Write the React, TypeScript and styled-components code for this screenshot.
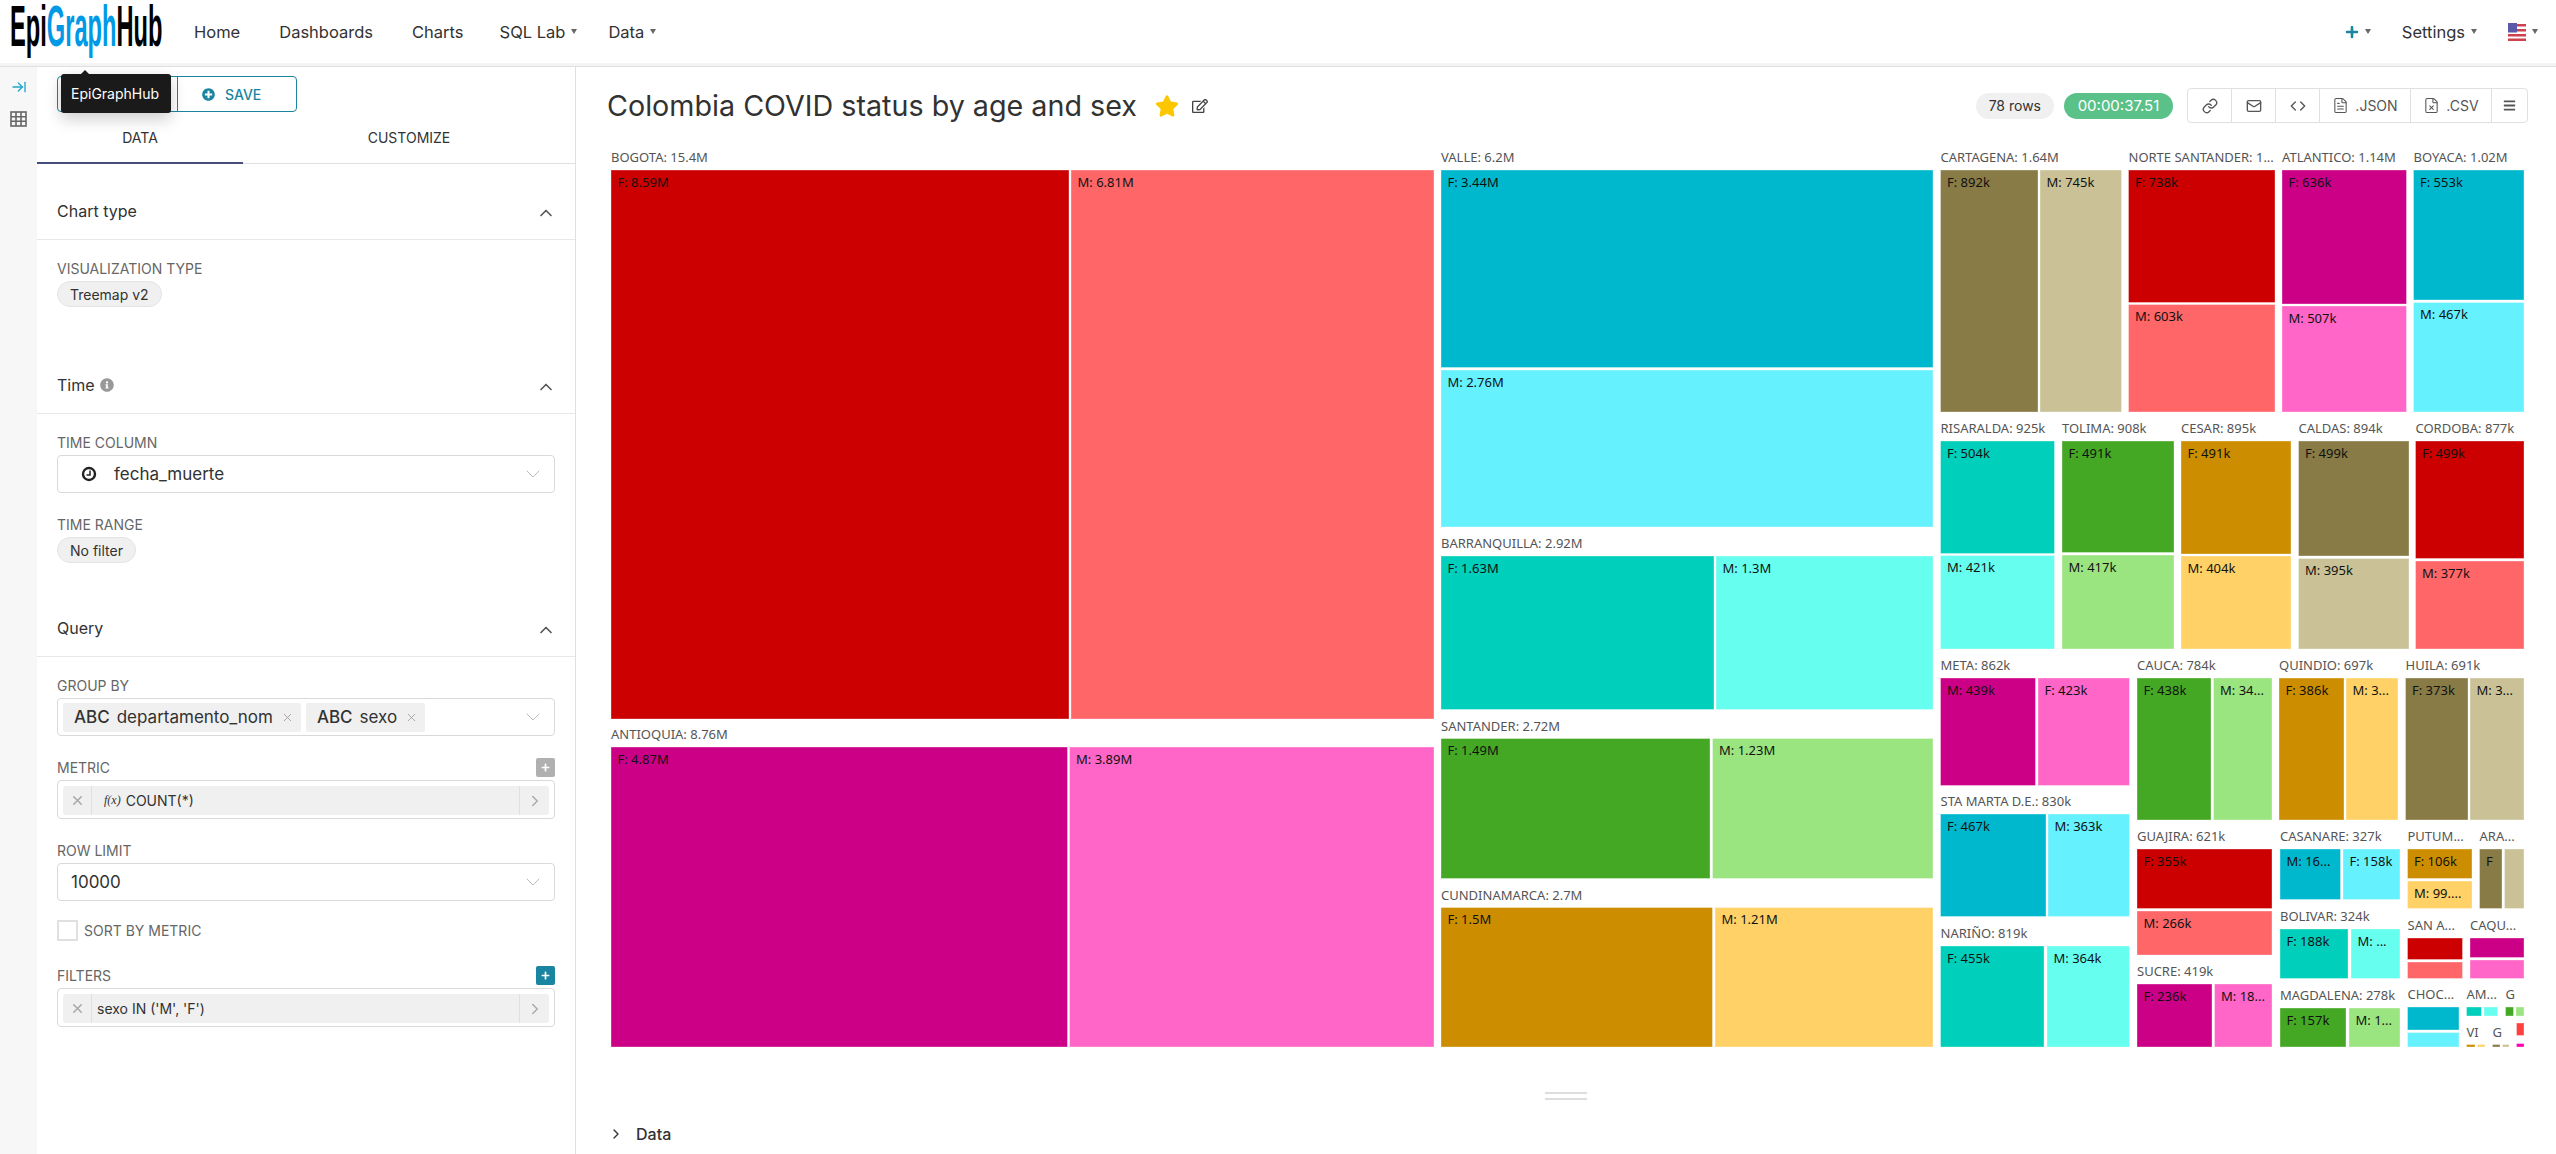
import styled, { createGlobalStyle } from "styled-components";
import { ArrowRightToLine, ChevronDown, ChevronRight, ChevronUp, Code, FileText, FileX, Link, Mail, X } from "lucide-react";
import { FaBars, FaInfoCircle, FaPlus, FaPlusCircle, FaRegEdit, FaStar } from "react-icons/fa";

const GlobalStyle = createGlobalStyle`
  html, body { margin: 0; padding: 0; background: #fff; }
  body { font-family: Inter, "Liberation Sans", sans-serif; color: #323232; overflow: hidden; }
`;

const Page = styled.div`
  width: 2556px;
  height: 1154px;
  display: flex;
  flex-direction: column;
  overflow: hidden;
`;

const Header = styled.header`
  height: 63px;
  flex: none;
  display: flex;
  align-items: center;
  padding: 0 18px 0 10px;
  border-bottom: 3px solid #f4f4f4;
  box-shadow: 0 1px 0 #e0e0e0;
`;

const LogoMark = styled.svg`
  flex: none;
  overflow: visible;
`;

const Nav = styled.nav`
  display: flex;
  align-items: center;
  gap: 39px;
  margin-left: 32px;
  font-size: 16.5px;
  color: #323232;
`;

const NavItem = styled.span`
  display: flex;
  align-items: center;
  gap: 6px;
`;

// carets sit closer to the neighbouring items than plain links do
const CaretItem = styled(NavItem)`
  margin: 0 -5px 0 -3px;
`;

const Caret = styled.i`
  width: 0;
  height: 0;
  border-left: 3px solid transparent;
  border-right: 3px solid transparent;
  border-top: 5px solid #666;
`;

const RightNav = styled(Nav)`
  margin-left: auto;
  gap: 31px;
`;

const Body = styled.div`
  flex: 1;
  display: flex;
  min-height: 0;
  margin-top: 1px;
`;

const Rail = styled.aside`
  width: 37px;
  flex: none;
  background: #f7f7f7;
  display: flex;
  flex-direction: column;
  align-items: center;
  padding-top: 12px;
  gap: 16px;
  color: #666;
`;

const Sidebar = styled.aside`
  width: 538px;
  flex: none;
  position: relative;
  border-right: 1px solid #e0e0e0;
`;

const ButtonRow = styled.div`
  display: flex;
  margin: 9px 0 0 20px;
  width: 240px;
  height: 36px;
  border: 1px solid #1985a0;
  border-radius: 4px;
  box-sizing: border-box;
`;

const RunSlot = styled.div`
  width: 119px;
  border-right: 1px solid #1985a0;
`;

const SaveButton = styled.div`
  flex: 1;
  display: flex;
  align-items: center;
  gap: 10px;
  padding-left: 24px;
  color: #1985a0;
  font-size: 14px;
  font-weight: 500;
`;

const Tooltip = styled.div`
  position: absolute;
  left: 24px;
  top: 7px;
  width: 110px;
  height: 39px;
  box-sizing: border-box;
  padding-left: 10px;
  display: flex;
  align-items: center;
  background: #1a1a1a;
  color: #fff;
  font-size: 14px;
  border-radius: 3px;
  box-shadow: 0 6px 16px rgba(0, 0, 0, 0.2);
  &::before {
    content: "";
    position: absolute;
    left: 20px;
    top: -4px;
    border-left: 4px solid transparent;
    border-right: 4px solid transparent;
    border-bottom: 4px solid #1a1a1a;
  }
`;

const Tabs = styled.div`
  display: flex;
  height: 52px;
  margin-bottom: 2px;
  box-sizing: border-box;
  border-bottom: 1px solid #e0e0e0;
`;

const Tab = styled.div<{ $active?: boolean; $width: number }>`
  width: ${({ $width }) => $width}px;
  height: 52px;
  box-sizing: border-box;
  display: flex;
  align-items: center;
  justify-content: center;
  font-size: 14px;
  color: #323232;
  border-bottom: 2px solid ${({ $active }) => ($active ? "#484e7a" : "transparent")};
`;

const SectionHeader = styled.div`
  height: 74px;
  box-sizing: border-box;
  display: flex;
  align-items: flex-end;
  justify-content: space-between;
  padding: 0 19px 16px 20px;
  border-bottom: 1px solid #e8e8e8;
  font-size: 16px;
  line-height: 24px;
  color: #323232;
  > svg { color: #555; }
`;

const SectionTitle = styled.span`
  display: flex;
  align-items: center;
  gap: 5px;
  svg { color: #999; }
`;

const SectionBody = styled.div<{ $bottom: number }>`
  display: flex;
  flex-direction: column;
  gap: 21px;
  padding: 18px 20px ${({ $bottom }) => $bottom}px 20px;
`;

const Field = styled.div`
  display: flex;
  flex-direction: column;
`;

const FieldLabel = styled.div`
  display: flex;
  align-items: center;
  justify-content: space-between;
  height: 20px;
  margin-bottom: 3px;
  font-size: 14px;
  color: #666;
  text-transform: uppercase;
`;

const Pill = styled.span`
  align-self: flex-start;
  height: 26px;
  box-sizing: border-box;
  padding: 0 12px;
  display: inline-flex;
  align-items: center;
  background: #f0f0f0;
  border: 1px solid #e4e4e4;
  border-radius: 13px;
  font-size: 14px;
  color: #323232;
`;

const SelectBox = styled.div`
  height: 38px;
  box-sizing: border-box;
  display: flex;
  align-items: center;
  padding: 0 9px 0 5px;
  gap: 5px;
  border: 1px solid #d9d9d9;
  border-radius: 4px;
  font-size: 17px;
  color: #323232;
  > svg:last-child { margin-left: auto; color: #bbb; }
`;

const PlainValue = styled.span<{ $left: number }>`
  margin-left: ${({ $left }) => $left}px;
`;

const ClockIcon = styled.svg`
  flex: none;
  margin-left: 18px;
  margin-right: 12px;
`;

const Chip = styled.span`
  height: 29px;
  display: flex;
  align-items: center;
  padding: 0 7px 0 11px;
  background: #f0f0f0;
  border-radius: 2px;
  color: #323232;
`;

const ChipType = styled.b`
  font-weight: 500;
  margin-right: 7px;
`;

const ChipClose = styled.span`
  display: flex;
  margin-left: 8px;
  color: #999;
`;

const AddButton = styled.span<{ $active?: boolean }>`
  width: 19px;
  height: 19px;
  display: flex;
  align-items: center;
  justify-content: center;
  border-radius: 2px;
  color: #fff;
  background: ${({ $active }) => ($active ? "#1985a0" : "#b0b0b0")};
`;

const ValueBox = styled.div`
  height: 39px;
  box-sizing: border-box;
  padding: 5px;
  border: 1px solid #d9d9d9;
  border-radius: 4px;
`;

const ValueChip = styled.div`
  height: 29px;
  display: flex;
  align-items: center;
  background: #f0f0f0;
  border-radius: 3px;
  font-size: 14px;
  color: #323232;
`;

const ValueClose = styled.span`
  width: 28px;
  height: 100%;
  display: flex;
  align-items: center;
  justify-content: center;
  color: #aaa;
  border-right: 1px solid #e0e0e0;
`;

const ValueText = styled.span`
  flex: 1;
  padding-left: 5px;
  display: flex;
  align-items: center;
`;

const FxMark = styled.em`
  font-family: "Liberation Serif", serif;
  font-size: 12px;
  margin: 0 5px 0 7px;
`;

const ValueMore = styled.span`
  width: 29px;
  height: 100%;
  display: flex;
  align-items: center;
  justify-content: center;
  color: #aaa;
  border-left: 1px solid #e0e0e0;
`;

const CheckRow = styled.div`
  display: flex;
  align-items: center;
  gap: 6px;
  margin: -2px 0 3px;
  font-size: 14px;
  color: #666;
`;

const CheckBox = styled.span`
  width: 21px;
  height: 21px;
  box-sizing: border-box;
  border: 2px solid #e0e0e0;
`;

const Main = styled.main`
  flex: 1;
  min-width: 0;
  display: flex;
  flex-direction: column;
`;

const TitleRow = styled.div`
  height: 73px;
  flex: none;
  display: flex;
  align-items: center;
  padding: 4px 28px 0 31px;
  box-sizing: border-box;
`;

const Title = styled.h1`
  margin: 0 18px 0 0;
  font-size: 28.7px;
  font-weight: 400;
  color: #323232;
`;

const StarIcon = styled.span`
  display: flex;
  color: #fcc700;
  margin-right: 13px;
`;

const EditIcon = styled.span`
  display: flex;
  color: #444;
`;

const RowCount = styled.span`
  margin-left: auto;
  height: 26px;
  padding: 0 13px;
  display: flex;
  align-items: center;
  border-radius: 13px;
  background: #f0f0f0;
  font-size: 14px;
  color: #323232;
`;

const Timer = styled(RowCount)`
  width: 109px;
  box-sizing: border-box;
  padding: 0;
  justify-content: center;
  margin-left: 10px;
  margin-right: 14px;
  background: #5ac189;
  color: #fff;
  font-size: 15px;
`;

const ActionGroup = styled.div`
  display: flex;
  height: 35px;
  box-sizing: border-box;
  border: 1px solid #e0e0e0;
  border-radius: 4px;
`;

const ActionButton = styled.span<{ $width: number }>`
  width: ${({ $width }) => $width}px;
  box-sizing: border-box;
  display: flex;
  align-items: center;
  justify-content: center;
  gap: 6px;
  border-right: 1px solid #e0e0e0;
  font-size: 14px;
  color: #555;
  &:last-child { border-right: 0; }
`;

const ChartSvg = styled.svg`
  display: block;
  flex: none;
  margin-left: 24px;
`;

const Cell = styled.rect`
  stroke: #fff;
  stroke-opacity: 0.35;
  stroke-width: 1;
`;

const GroupLabel = styled.text`
  font-family: "Noto Sans", "Open Sans", sans-serif;
  font-size: 13px;
  fill: #555;
`;

const LeafLabel = styled.text`
  font-family: "Noto Sans", "Open Sans", sans-serif;
  font-size: 13px;
  fill: #111;
`;

const Resizer = styled.div`
  align-self: center;
  margin: 40px 0 0 -1px;
  width: 42px;
  height: 8px;
  box-sizing: border-box;
  border-top: 2px solid #ddd;
  border-bottom: 2px solid #ddd;
`;

const DataRow = styled.div`
  display: flex;
  align-items: center;
  gap: 12px;
  margin: 24px 0 0 32px;
  font-size: 16px;
  font-weight: 500;
  color: #323232;
`;

const colors: Record<string, string> = {
  red: "#cc0000",
  red2: "#ff6668",
  mag: "#cc0086",
  mag2: "#ff66c7",
  cyan: "#00b8ce",
  cyan2: "#66f1ff",
  teal: "#00cfbb",
  teal2: "#66ffef",
  green: "#45a825",
  green2: "#9be581",
  gold: "#cc8e00",
  gold2: "#ffd166",
  olive: "#887b45",
  olive2: "#cac296",
};

type Leaf = [number, number, number, number, string, string];
type Group = { label: string; x: number; leaves: Leaf[] };

// x0, x1, y0, y1, colour, text, in page coordinates
const groups: Group[] = [
  { label: "BOGOTA: 15.4M", x: 611, leaves: [[611, 1069, 170, 719, "red", "F: 8.59M"], [1071, 1434, 170, 719, "red2", "M: 6.81M"]] },
  { label: "ANTIOQUIA: 8.76M", x: 611, leaves: [[611, 1067.5, 747, 1047, "mag", "F: 4.87M"], [1069.5, 1434, 747, 1047, "mag2", "M: 3.89M"]] },
  { label: "VALLE: 6.2M", x: 1441, leaves: [[1441, 1933, 170, 367.5, "cyan", "F: 3.44M"], [1441, 1933, 370, 527, "cyan2", "M: 2.76M"]] },
  { label: "BARRANQUILLA: 2.92M", x: 1441, leaves: [[1441, 1714, 556, 709.5, "teal", "F: 1.63M"], [1716, 1933, 556, 709.5, "teal2", "M: 1.3M"]] },
  { label: "SANTANDER: 2.72M", x: 1441, leaves: [[1441, 1710, 738.5, 878.5, "green", "F: 1.49M"], [1712.5, 1933, 738.5, 878.5, "green2", "M: 1.23M"]] },
  { label: "CUNDINAMARCA: 2.7M", x: 1441, leaves: [[1441, 1712.5, 907.5, 1047, "gold", "F: 1.5M"], [1715, 1933, 907.5, 1047, "gold2", "M: 1.21M"]] },
  { label: "CARTAGENA: 1.64M", x: 1940.5, leaves: [[1940.5, 2038, 170, 412, "olive", "F: 892k"], [2040, 2121.5, 170, 412, "olive2", "M: 745k"]] },
  { label: "NORTE SANTANDER: 1...", x: 2128.5, leaves: [[2128.5, 2275, 170, 302.5, "red", "F: 738k"], [2128.5, 2275, 304.5, 412, "red2", "M: 603k"]] },
  { label: "ATLANTICO: 1.14M", x: 2282, leaves: [[2282, 2406.5, 170, 304, "mag", "F: 636k"], [2282, 2406.5, 306, 412, "mag2", "M: 507k"]] },
  { label: "BOYACA: 1.02M", x: 2413.5, leaves: [[2413.5, 2524, 170, 300, "cyan", "F: 553k"], [2413.5, 2524, 302.5, 412, "cyan2", "M: 467k"]] },
  { label: "RISARALDA: 925k", x: 1940.5, leaves: [[1940.5, 2054.5, 441, 553.5, "teal", "F: 504k"], [1940.5, 2054.5, 555.5, 649, "teal2", "M: 421k"]] },
  { label: "TOLIMA: 908k", x: 2062, leaves: [[2062, 2174, 441, 552.5, "green", "F: 491k"], [2062, 2174, 555, 649, "green2", "M: 417k"]] },
  { label: "CESAR: 895k", x: 2181, leaves: [[2181, 2291, 441, 554, "gold", "F: 491k"], [2181, 2291, 556, 649, "gold2", "M: 404k"]] },
  { label: "CALDAS: 894k", x: 2298.5, leaves: [[2298.5, 2409, 441, 556, "olive", "F: 499k"], [2298.5, 2409, 558.5, 649, "olive2", "M: 395k"]] },
  { label: "CORDOBA: 877k", x: 2415.5, leaves: [[2415.5, 2524, 441, 558.5, "red", "F: 499k"], [2415.5, 2524, 561, 649, "red2", "M: 377k"]] },
  { label: "META: 862k", x: 1940.5, leaves: [[1940.5, 2035.5, 678, 785.5, "mag", "M: 439k"], [2038, 2129.5, 678, 785.5, "mag2", "F: 423k"]] },
  { label: "STA MARTA D.E.: 830k", x: 1940.5, leaves: [[1940.5, 2046, 814, 916.5, "cyan", "F: 467k"], [2048, 2129.5, 814, 916.5, "cyan2", "M: 363k"]] },
  { label: "NARIÑO: 819k", x: 1940.5, leaves: [[1940.5, 2044, 946, 1047, "teal", "F: 455k"], [2047, 2129.5, 946, 1047, "teal2", "M: 364k"]] },
  { label: "CAUCA: 784k", x: 2137, leaves: [[2137, 2211, 678, 820, "green", "F: 438k"], [2213.5, 2272, 678, 820, "green2", "M: 34..."]] },
  { label: "QUINDIO: 697k", x: 2279, leaves: [[2279, 2344, 678, 820, "gold", "F: 386k"], [2346, 2398, 678, 820, "gold2", "M: 3..."]] },
  { label: "HUILA: 691k", x: 2405.5, leaves: [[2405.5, 2468, 678, 820, "olive", "F: 373k"], [2470, 2524, 678, 820, "olive2", "M: 3..."]] },
  { label: "GUAJIRA: 621k", x: 2137, leaves: [[2137, 2272, 849, 908.5, "red", "F: 355k"], [2137, 2272, 911, 955, "red2", "M: 266k"]] },
  { label: "SUCRE: 419k", x: 2137, leaves: [[2137, 2212, 984, 1047, "mag", "F: 236k"], [2214.5, 2272, 984, 1047, "mag2", "M: 18..."]] },
  { label: "CASANARE: 327k", x: 2280, leaves: [[2280, 2340.5, 849, 899.5, "cyan", "M: 16..."], [2343, 2400, 849, 899.5, "cyan2", "F: 158k"]] },
  { label: "BOLIVAR: 324k", x: 2280, leaves: [[2280, 2348, 929, 978.5, "teal", "F: 188k"], [2351, 2400, 929, 978.5, "teal2", "M: ..."]] },
  { label: "MAGDALENA: 278k", x: 2280, leaves: [[2280, 2346, 1008, 1047, "green", "F: 157k"], [2349, 2400, 1008, 1047, "green2", "M: 1..."]] },
  { label: "PUTUM...", x: 2407.5, leaves: [[2407.5, 2472, 849, 878.5, "gold", "F: 106k"], [2407.5, 2472, 881, 908.5, "gold2", "M: 99...."]] },
  { label: "ARA...", x: 2479.5, leaves: [[2479.5, 2502, 849, 908.5, "olive", "F"], [2504.5, 2524, 849, 908.5, "olive2", ""]] },
  { label: "SAN A...", x: 2407.5, leaves: [[2407.5, 2462.5, 938, 959.5, "red", ""], [2407.5, 2462.5, 962, 978.5, "red2", ""]] },
  { label: "CAQU...", x: 2470, leaves: [[2470, 2524, 938, 957.5, "mag", ""], [2470, 2524, 960, 978.5, "mag2", ""]] },
  { label: "CHOC...", x: 2407.5, leaves: [[2407.5, 2459, 1007, 1030, "cyan", ""], [2407.5, 2459, 1032.5, 1047, "cyan2", ""]] },
  { label: "AM...", x: 2466.5, leaves: [[2466.5, 2481.5, 1007, 1016, "teal", ""], [2484, 2497.5, 1007, 1016, "teal2", ""]] },
  { label: "G", x: 2505.5, leaves: [[2505.5, 2513.5, 1007, 1016, "green", ""], [2516, 2524, 1007, 1016, "green2", ""]] },
  { label: "VI", x: 2466.5, leaves: [[2466.5, 2475, 1044.5, 1047, "gold", ""], [2477.5, 2485, 1044.5, 1047, "gold2", ""]] },
  { label: "G", x: 2492.5, leaves: [[2492.5, 2500, 1044.5, 1047, "olive", ""], [2502.5, 2509, 1044.5, 1047, "olive2", ""]] },
];

const Treemap = () => (
  <ChartSvg width={1940} height={912} viewBox="600 140 1940 912">
    {groups.map((group) => (
      <g key={group.label + group.x}>
        <GroupLabel x={group.x} y={group.leaves[0][2] - 8}>{group.label}</GroupLabel>
        {group.leaves.map(([x0, x1, y0, y1, color, text]) => (
          <g key={color}>
            <Cell x={x0} y={y0} width={x1 - x0} height={y1 - y0} fill={colors[color]} />
            {text && <LeafLabel x={x0 + 6.5} y={y0 + 16.5}>{text}</LeafLabel>}
          </g>
        ))}
      </g>
    ))}
    <Cell x={2516.5} y={1023} width={7.5} height={12.5} fill="#ff4040" />
    <Cell x={2516.5} y={1043.5} width={7.5} height={3.5} fill="#ff00b4" />
  </ChartSvg>
);

// condensed wordmark, real text squeezed horizontally
const Logo = () => (
  <LogoMark width={152} height={54} viewBox="0 0 152 54">
    <text
      x={0}
      y={41}
      transform="scale(0.415 1)"
      fontFamily="Liberation Sans, sans-serif"
      fontWeight={700}
      fontSize={57}
      fill="#000"
    >
      Epi<tspan fill="#0099e6">Graph</tspan>Hub
    </text>
  </LogoMark>
);

const GridIcon = () => (
  <svg width={17} height={16} viewBox="0 0 17 16" fill="none" stroke="#666" strokeWidth={1.6}>
    <rect x={1} y={1} width={15} height={14} />
    <path d="M6 1v14M11 1v14M1 5.7h15M1 10.3h15" />
  </svg>
);

const Clock = () => (
  <ClockIcon width={16} height={16} viewBox="0 0 16 16" fill="none" stroke="#222">
    <circle cx={8} cy={8} r={6} strokeWidth={2.4} />
    <path d="M9 4.5V9H5.5" strokeWidth={1.5} />
  </ClockIcon>
);

const Flag = () => (
  <svg width={18} height={18} viewBox="0 0 18 18">
    <rect width={18} height={18} fill="#fff" />
    <path d="M0 1h18v2.5H0zM0 6h18v2.5H0zM0 11h18v2.5H0zM0 15.5h18V18H0z" fill="#d0414f" />
    <rect width={9} height={9.5} fill="#5a5aa8" />
  </svg>
);

const ChipX = () => (
  <ChipClose>
    <X size={13} strokeWidth={1.5} />
  </ChipClose>
);

const App = () => (
  <Page>
    <GlobalStyle />
    <Header>
      <Logo />
      <Nav>
        <NavItem>Home</NavItem>
        <NavItem>Dashboards</NavItem>
        <NavItem>Charts</NavItem>
        <CaretItem>SQL Lab <Caret /></CaretItem>
        <CaretItem>Data <Caret /></CaretItem>
      </Nav>
      <RightNav>
        <NavItem><FaPlus size={14} color="#1985a0" /> <Caret /></NavItem>
        <NavItem>Settings <Caret /></NavItem>
        <NavItem><Flag /> <Caret /></NavItem>
      </RightNav>
    </Header>
    <Body>
      <Rail>
        <ArrowRightToLine size={16} color="#20a7c9" />
        <GridIcon />
      </Rail>
      <Sidebar>
        <ButtonRow>
          <RunSlot />
          <SaveButton><FaPlusCircle size={13} /> SAVE</SaveButton>
        </ButtonRow>
        <Tooltip>EpiGraphHub</Tooltip>
        <Tabs>
          <Tab $active $width={206}>DATA</Tab>
          <Tab $width={332}>CUSTOMIZE</Tab>
        </Tabs>

        <SectionHeader>
          <SectionTitle>Chart type</SectionTitle>
          <ChevronUp size={20} />
        </SectionHeader>
        <SectionBody $bottom={33}>
          <Field>
            <FieldLabel>Visualization type</FieldLabel>
            <Pill>Treemap v2</Pill>
          </Field>
        </SectionBody>

        <SectionHeader>
          <SectionTitle>Time <FaInfoCircle size={14} /></SectionTitle>
          <ChevronUp size={20} />
        </SectionHeader>
        <SectionBody $bottom={20}>
          <Field>
            <FieldLabel>Time column</FieldLabel>
            <SelectBox>
              <Clock />
              fecha_muerte
              <ChevronDown size={24} strokeWidth={1} />
            </SelectBox>
          </Field>
          <Field>
            <FieldLabel>Time range</FieldLabel>
            <Pill>No filter</Pill>
          </Field>
        </SectionBody>

        <SectionHeader>
          <SectionTitle>Query</SectionTitle>
          <ChevronUp size={20} />
        </SectionHeader>
        <SectionBody $bottom={0}>
          <Field>
            <FieldLabel>Group by</FieldLabel>
            <SelectBox>
              <Chip><ChipType>ABC</ChipType>departamento_nom<ChipX /></Chip>
              <Chip><ChipType>ABC</ChipType>sexo<ChipX /></Chip>
              <ChevronDown size={24} strokeWidth={1} />
            </SelectBox>
          </Field>
          <Field>
            <FieldLabel>Metric <AddButton><FaPlus size={9} /></AddButton></FieldLabel>
            <ValueBox>
              <ValueChip>
                <ValueClose><X size={15} strokeWidth={2.5} /></ValueClose>
                <ValueText><FxMark>f(x)</FxMark> COUNT(*)</ValueText>
                <ValueMore><ChevronRight size={18} strokeWidth={2} /></ValueMore>
              </ValueChip>
            </ValueBox>
          </Field>
          <Field>
            <FieldLabel>Row limit</FieldLabel>
            <SelectBox>
              <PlainValue $left={8}>10000</PlainValue>
              <ChevronDown size={24} strokeWidth={1} />
            </SelectBox>
          </Field>
          <CheckRow><CheckBox /> SORT BY METRIC</CheckRow>
          <Field>
            <FieldLabel>Filters <AddButton $active><FaPlus size={9} /></AddButton></FieldLabel>
            <ValueBox>
              <ValueChip>
                <ValueClose><X size={15} strokeWidth={2.5} /></ValueClose>
                <ValueText>sexo IN ('M', 'F')</ValueText>
                <ValueMore><ChevronRight size={18} strokeWidth={2} /></ValueMore>
              </ValueChip>
            </ValueBox>
          </Field>
        </SectionBody>
      </Sidebar>
      <Main>
        <TitleRow>
          <Title>Colombia COVID status by age and sex</Title>
          <StarIcon><FaStar size={24} /></StarIcon>
          <EditIcon><FaRegEdit size={16} /></EditIcon>
          <RowCount>78 rows</RowCount>
          <Timer>00:00:37.51</Timer>
          <ActionGroup>
            <ActionButton $width={44}><Link size={16} /></ActionButton>
            <ActionButton $width={44}><Mail size={16} /></ActionButton>
            <ActionButton $width={44}><Code size={16} /></ActionButton>
            <ActionButton $width={91}><FileText size={17} strokeWidth={1.5} /> .JSON</ActionButton>
            <ActionButton $width={81}><FileX size={17} strokeWidth={1.5} /> .CSV</ActionButton>
            <ActionButton $width={35}><FaBars size={13} /></ActionButton>
          </ActionGroup>
        </TitleRow>
        <Treemap />
        <Resizer />
        <DataRow><ChevronRight size={16} /> Data</DataRow>
      </Main>
    </Body>
  </Page>
);

export default App;
